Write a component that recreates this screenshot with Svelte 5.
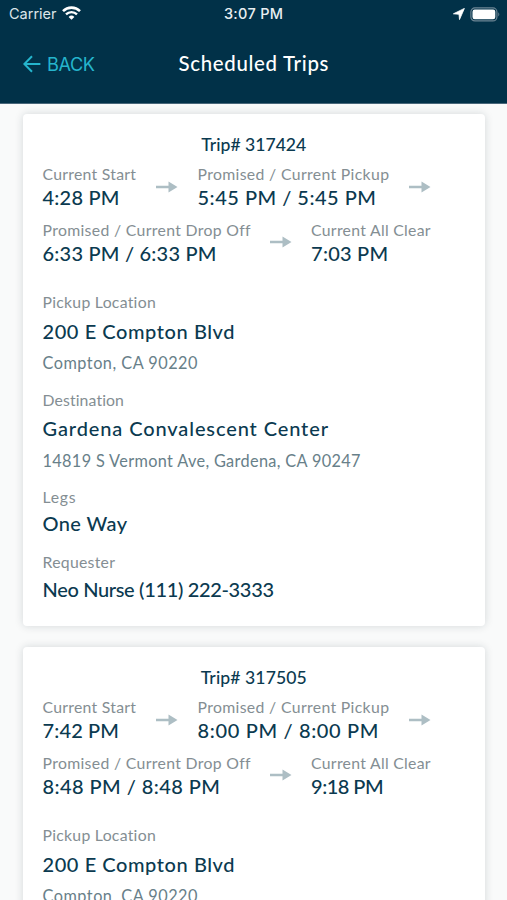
<script>
  const trips = [
    {
      id: ['Trip# 317424', 105],
      rows: [
        [
          { label: ['Current Start', 93.5], value: ['4:28 PM', 77], arrow: 20 },
          { label: ['Promised / Current Pickup', 191.5], value: ['5:45 PM / 5:45 PM', 178.5], arrow: 20 }
        ],
        [
          { label: ['Promised / Current Drop Off', 207.5], value: ['6:33 PM / 6:33 PM', 174], arrow: 19 },
          { label: ['Current All Clear', 119.5], value: ['7:03 PM', 77] }
        ]
      ]
    },
    {
      id: ['Trip# 317505', 106],
      rows: [
        [
          { label: ['Current Start', 93.5], value: ['7:42 PM', 76.5], arrow: 20 },
          { label: ['Promised / Current Pickup', 191.5], value: ['8:00 PM / 8:00 PM', 181], arrow: 20 }
        ],
        [
          { label: ['Promised / Current Drop Off', 207.5], value: ['8:48 PM / 8:48 PM', 177.5], arrow: 19 },
          { label: ['Current All Clear', 119.5], value: ['9:18 PM', 72.5] }
        ]
      ]
    }
  ];

  const details = [
    { label: ['Pickup Location', 113.5], value: ['200 E Compton Blvd', 192], sub: ['Compton, CA 90220', 155] },
    { label: ['Destination', 82], value: ['Gardena Convalescent Center', 285.5], sub: ['14819 S Vermont Ave, Gardena, CA 90247', 318] },
    { label: ['Legs', 33], value: ['One Way', 84.5], tight: 2.8 },
    { label: ['Requester', 72.5], value: ['Neo Nurse (111) 222-3333', 231.5], tight: 4 }
  ];

  // Spreads the tracking so that the text takes the given width.
  function track(node, width) {
    const natural = node.getBoundingClientRect().width;
    const gap = (width - natural) / (node.textContent.length - 1);
    node.style.letterSpacing = `${gap}px`;
    node.style.marginRight = `${-gap}px`;
  }
</script>

{#snippet words(t)}<span class="words" use:track={t[1]}>{t[0]}</span>{/snippet}

<div class="screen">
  <header>
    <div class="status">
      <div class="carrier">
        {@render words(['Carrier', 47.5])}
        <svg width="19" height="14" viewBox="0 0 19 14" fill="none" stroke="#fff">
          <path d="M1 5.1A12.2 12.2 0 0 1 18 5.1" stroke-width="2.6" />
          <path d="M4 8.4A7.9 7.9 0 0 1 15 8.4" stroke-width="2.4" />
          <path d="M9.5 13.8L6.6 10.9A4.2 4.2 0 0 1 12.4 10.9Z" fill="#fff" stroke="none" />
        </svg>
      </div>
      <div class="clock">{@render words(['3:07 PM', 59])}</div>
      <div class="power">
        <svg width="12" height="12" viewBox="0 0 12 12"><path d="M.4 5.8L11.4.4L6.5 11.6L6 6.3Z" fill="#fff" stroke="#fff" stroke-width=".8" stroke-linejoin="round" /></svg>
        <svg width="31" height="15" viewBox="0 0 31 15">
          <rect x=".9" y=".9" width="26" height="13" rx="4" fill="none" stroke="#6c8594" stroke-width="1.2" />
          <rect x="2.5" y="2.5" width="22.8" height="9.8" rx="2.2" fill="#fff" />
          <path d="M28.3 5.2Q30.3 7.4 28.3 9.6Z" fill="#6c8594" />
        </svg>
      </div>
    </div>
    <div class="nav">
      <div class="back">
        <svg width="18" height="18" viewBox="0 0 18 18" fill="none" stroke="#25b5cd" stroke-width="2"><path d="M17.4 9H1.5M9 1.2L1.3 9L9 16.8" /></svg>
        {@render words(['BACK', 48])}
      </div>
      <h1>{@render words(['Scheduled Trips', 150])}</h1>
      <div></div>
    </div>
  </header>

  <main>
    {#each trips as trip}
      <article>
        <h2>{@render words(trip.id)}</h2>
        {#each trip.rows as row}
          <div class="row">
            {#each row as step}
              <div class="step">
                <div class="label">{@render words(step.label)}</div>
                <div class="value">{@render words(step.value)}</div>
              </div>
              {#if step.arrow}
                <svg class="arrow" style="margin-left: {step.arrow}px" width="22" height="12" viewBox="0 0 22 12"><path d="M0 4.8H12.5V.4L21.5 6L12.5 11.6V7.2H0Z" fill="#adbec4" /></svg>
              {/if}
            {/each}
          </div>
        {/each}
        <div class="details">
          {#each details as d}
            <section class:short={!d.sub}>
              <div class="label">{@render words(d.label)}</div>
              <div class="value" style="margin-top: {d.tight ?? 5.5}px">{@render words(d.value)}</div>
              {#if d.sub}<div class="sub">{@render words(d.sub)}</div>{/if}
            </section>
          {/each}
        </div>
      </article>
    {/each}
  </main>
</div>

<style>
  :global(body) { margin: 0; background: #f9fafa; }
  .screen { width: 507px; height: 900px; overflow: hidden; display: flex; flex-direction: column; background: #f9fafa; font-family: Lato, "Liberation Sans", sans-serif; }
  .words { display: inline-block; white-space: pre; }
  svg { display: block; flex: none; }

  header { height: 104px; flex: none; background: #013148; border-bottom: 1px solid #49677a; box-sizing: border-box; color: #fff; }
  .status, .nav { display: grid; grid-template-columns: 1fr auto 1fr; align-items: center; }
  .status { height: 28px; padding: 0 6px 0 9px; font: 14.5px/28px Inter, sans-serif; }
  .carrier { display: flex; align-items: center; gap: 5px; color: #dce5e9; }
  .carrier svg { margin-top: -2px; }
  .clock { font-weight: 500; color: #e8eef1; margin-left: -3px; }
  .power { display: flex; justify-content: flex-end; align-items: center; gap: 5px; }
  .nav { height: 73px; padding: 0 23px; }
  .back { display: flex; align-items: center; gap: 6px; margin-top: -1px; color: #25b5cd; font: 18.2px/26px Inter, sans-serif; }
  h1 { margin: -4px 0 0; font-size: 20.4px; line-height: 26px; font-weight: 500; }

  main { padding: 10px 22px 0 23px; display: flex; flex-direction: column; gap: 21px; }
  article { height: 512px; flex: none; box-sizing: border-box; padding: 18.5px 20px 0 19.5px; background: #fff; border-radius: 4px; box-shadow: 0 0 9px rgba(20, 40, 50, .16); color: #0b3a50; }
  h2 { margin: 0 0 5.8px; text-align: center; font-size: 17.6px; line-height: 24px; font-weight: 500; }
  .row { display: flex; height: 47px; margin-bottom: 8.5px; }
  .arrow { margin-top: 18.7px; margin-right: 19.5px; }
  .label { height: 23px; font-size: 15.8px; line-height: 23px; color: #848e93; }
  .value { height: 24px; font-size: 20px; line-height: 24px; font-weight: 500; }
  .row .value { margin-top: .2px; }
  .details { padding-top: 17px; display: flex; flex-direction: column; gap: 14px; }
  .sub { height: 23px; margin: 8.5px 0 -.6px; font-size: 16.3px; line-height: 23px; color: #688089; }
  .short + .short { margin-top: 1.5px; }
</style>
